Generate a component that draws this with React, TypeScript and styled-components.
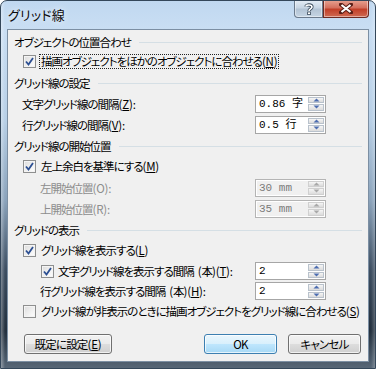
import React from "react";
import styled, { createGlobalStyle } from "styled-components";

const ui = `"Noto Sans CJK JP", "Noto Sans", sans-serif`;
const mono = `"Liberation Mono", "Noto Sans CJK JP", monospace`;

const GlobalStyle = createGlobalStyle`
  html, body {
    margin: 0;
    padding: 0;
    background: #ffffff;
  }
  body {
    font-family: ${ui};
  }
`;

const Window = styled.div`
  width: 376px;
  height: 369px;
  box-sizing: border-box;
  display: flex;
  flex-direction: column;
  border: 1px solid #34475a;
  border-radius: 7px 7px 0 0;
  overflow: hidden;
  background:
    linear-gradient(90deg, rgba(255, 255, 255, 0.35) 0px, rgba(255, 255, 255, 0) 4px, rgba(0, 0, 0, 0) 370px, rgba(255, 255, 255, 0.25) 374px),
    linear-gradient(180deg, #c0d8f0 0px, #c9def3 28px, #b7cfe6 120px, #8aa2ba 200px, #3c4d60 270px, #23303e 330px, #5a6a7a 369px);
`;

const TitleBar = styled.div`
  height: 28px;
  display: flex;
  align-items: flex-start;
`;

const Title = styled.div`
  flex: 1;
  padding: 6px 0 0 7px;
  font-size: 13px;
  line-height: 16px;
  color: #0c0c0c;
  letter-spacing: 0.2px;
  font-feature-settings: "palt";
  text-shadow: 0 0 6px rgba(255, 255, 255, 0.9);
`;

const Caption = styled.div<{ $close?: boolean }>`
  width: ${(p) => (p.$close ? 46 : 29)}px;
  height: 18px;
  margin-top: -1px;
  box-sizing: border-box;
  display: flex;
  align-items: center;
  justify-content: center;
  border: 1px solid ${(p) => (p.$close ? "#6d2a22" : "#6a7a8c")};
  border-top: none;
  border-radius: ${(p) => (p.$close ? "0 0 4px 0" : "0 0 0 4px")};
  margin-right: ${(p) => (p.$close ? 6 : 0)}px;
  background: ${(p) =>
    p.$close
      ? "linear-gradient(180deg, #e8a493 0%, #d4705e 45%, #c23f28 55%, #cf6a52 100%)"
      : "linear-gradient(180deg, #e6eef6 0%, #c8d6e4 45%, #b3c4d5 55%, #c5d5e4 100%)"};
  box-shadow: inset 0 0 0 1px rgba(255, 255, 255, 0.45);
`;

const Client = styled.div`
  flex: 1;
  margin: 0 6px 6px 6px;
  border: 1px solid #7c8fa3;
  background: #f0f0f0;
  display: flex;
  flex-direction: column;
  padding-top: 2px;
  font-size: 11.5px;
  letter-spacing: -1px;
  color: #000;
  font-feature-settings: "palt";
`;

const Header = styled.div<{ $gap?: number }>`
  height: 20px;
  margin-top: ${(p) => p.$gap ?? 0}px;
  display: flex;
  align-items: center;
  gap: 8px;
  padding: 0 6px;
  white-space: nowrap;

  &::after {
    content: "";
    flex: 1;
    height: 1px;
    background: #d5dfe5;
  }
`;

const Row = styled.div<{ $indent: number; $h?: number }>`
  height: ${(p) => p.$h ?? 21}px;
  display: flex;
  align-items: center;
  padding-left: ${(p) => p.$indent}px;
  padding-right: 42px;
  white-space: nowrap;
`;

const Label = styled.span<{ $disabled?: boolean; $gap?: number }>`
  flex: 1;
  margin-left: ${(p) => p.$gap ?? 0}px;
  color: ${(p) => (p.$disabled ? "#8d8d8d" : "#000")};
`;

const CheckText = styled.span<{ $focus?: boolean }>`
  margin-left: 3px;
  padding: 0 1px 0 1px;
  line-height: 13px;
  border: 1px dotted ${(p) => (p.$focus ? "#222" : "transparent")};
`;

const Latin = styled.span<{ $lead?: number }>`
  letter-spacing: -0.2px;
  margin-left: ${(p) => p.$lead ?? 0}px;
`;

const U = styled.span`
  text-decoration: underline;
  text-underline-offset: 1px;
`;

const Box = styled.span`
  width: 13px;
  height: 13px;
  box-sizing: border-box;
  border: 1px solid #8e8f8f;
  background: linear-gradient(135deg, #dcdcdc 0%, #f2f2f2 60%, #ffffff 100%);
  box-shadow: inset 0 0 0 1px #f4f4f4;
  display: inline-flex;
  align-items: center;
  justify-content: center;
  flex: none;
`;

const Spin = styled.div<{ $disabled?: boolean }>`
  width: 71px;
  height: 18px;
  box-sizing: border-box;
  border: 1px solid ${(p) => (p.$disabled ? "#b4b4b4" : "#a6a6a6")};
  box-shadow: inset 0 0 0 1px #ffffff;
  background: ${(p) => (p.$disabled ? "#f0f0f0" : "#ffffff")};
  display: flex;
  padding: 1px;
  flex: none;
  letter-spacing: 0;
`;

const SpinValue = styled.div<{ $disabled?: boolean }>`
  flex: 1;
  padding-left: 2px;
  font-family: ${mono};
  font-size: 11px;
  line-height: 14px;
  color: ${(p) => (p.$disabled ? "#7a7a7a" : "#000")};
`;

const SpinButtons = styled.div`
  width: 16px;
  display: flex;
  flex-direction: column;
  gap: 1px;
`;

const SpinBtn = styled.div<{ $disabled?: boolean }>`
  flex: 1;
  display: flex;
  align-items: center;
  justify-content: center;
  border: 1px solid ${(p) => (p.$disabled ? "#d0d0d0" : "#b9c2cc")};
  background: linear-gradient(180deg, #f6f6f6 0%, #e8e8e8 50%, #dcdcdc 100%);
`;

const Footer = styled.div`
  margin-top: auto;
  display: flex;
  align-items: center;
  padding: 0 7px 7px 5px;
`;

const Button = styled.button<{ $w: number; $default?: boolean; $push?: boolean }>`
  width: ${(p) => p.$w}px;
  height: 20px;
  padding: 0;
  margin-left: ${(p) => (p.$push ? "auto" : "11px")};
  font-family: ${ui};
  font-size: 11.5px;
  letter-spacing: -0.8px;
  line-height: 16px;
  font-feature-settings: "palt";
  color: #000;
  border-radius: 3px;
  border: 1px solid ${(p) => (p.$default ? "#3c7fb1" : "#707070")};
  box-shadow: inset 0 0 0 1px rgba(255, 255, 255, 0.7);
  background: ${(p) =>
    p.$default
      ? "linear-gradient(180deg, #eaf6fd 0%, #d9f0fc 48%, #bee6fd 52%, #a7d9f5 100%)"
      : "linear-gradient(180deg, #f2f2f2 0%, #ebebeb 48%, #dddddd 52%, #cfcfcf 100%)"};
`;

function Key({ k, plain, colon }: { k: string; plain?: boolean; colon?: boolean }) {
  return (
    <Latin>
      ({plain ? k : <U>{k}</U>}){colon ? ":" : ""}
    </Latin>
  );
}

function Check({ checked }: { checked?: boolean }) {
  return (
    <Box>
      {checked && (
        <svg width="9" height="9" viewBox="0 0 9 9">
          <path d="M1 4.5 L3.5 7.5 L8 1" fill="none" stroke="#2c4f92" strokeWidth="1.8" />
        </svg>
      )}
    </Box>
  );
}

function Arrow({ up, disabled }: { up?: boolean; disabled?: boolean }) {
  return (
    <svg width="7" height="4" viewBox="0 0 7 4">
      <path d={up ? "M0.5 3.5 L3.5 0.5 L6.5 3.5 Z" : "M0.5 0.5 L3.5 3.5 L6.5 0.5 Z"} fill={disabled ? "#a8a8a8" : "#4c6db0"} />
    </svg>
  );
}

function SpinBox({ value, disabled }: { value: string; disabled?: boolean }) {
  return (
    <Spin $disabled={disabled}>
      <SpinValue $disabled={disabled}>{value}</SpinValue>
      <SpinButtons>
        <SpinBtn $disabled={disabled}>
          <Arrow up disabled={disabled} />
        </SpinBtn>
        <SpinBtn $disabled={disabled}>
          <Arrow disabled={disabled} />
        </SpinBtn>
      </SpinButtons>
    </Spin>
  );
}

export default function App() {
  return (
    <>
      <GlobalStyle />
      <Window>
        <TitleBar>
          <Title>グリッド線</Title>
          <Caption>
            <svg width="10" height="12" viewBox="0 0 10 12">
              <path
                d="M2 3.5 C2 1.5 8 1.2 8 4 C8 6 5 5.8 5 8"
                fill="none"
                stroke="#3a4a5a"
                strokeWidth="3.2"
              />
              <path d="M2 3.5 C2 1.5 8 1.2 8 4 C8 6 5 5.8 5 8" fill="none" stroke="#fff" strokeWidth="1.6" />
              <rect x="3.6" y="9" width="2.8" height="2.6" fill="#fff" stroke="#3a4a5a" strokeWidth="0.8" />
            </svg>
          </Caption>
          <Caption $close>
            <svg width="14" height="11" viewBox="0 0 14 11">
              <path d="M2 1.5 L12 9.5 M12 1.5 L2 9.5" stroke="#5a1e16" strokeWidth="4" strokeLinecap="square" />
              <path d="M2.5 2 L11.5 9 M11.5 2 L2.5 9" stroke="#fff" strokeWidth="2.2" />
            </svg>
          </Caption>
        </TitleBar>
        <Client>
          <Header>オブジェクトの位置合わせ</Header>
          <Row $indent={15} $h={19}>
            <Check checked />
            <CheckText $focus>
              描画オブジェクトをほかのオブジェクトに合わせる<Key k="N" />
            </CheckText>
          </Row>
          <Header $gap={2}>グリッド線の設定</Header>
          <Row $indent={14}>
            <Label>
              文字グリッド線の間隔<Key k="Z" colon />
            </Label>
            <SpinBox value="0.86 字" />
          </Row>
          <Row $indent={14}>
            <Label>
              行グリッド線の間隔<Key k="V" colon />
            </Label>
            <SpinBox value="0.5 行" />
          </Row>
          <Header $gap={1}>グリッド線の開始位置</Header>
          <Row $indent={15}>
            <Check checked />
            <CheckText>
              左上余白を基準にする<Key k="M" />
            </CheckText>
          </Row>
          <Row $indent={32}>
            <Label $disabled>
              左開始位置<Key k="O" plain colon />
            </Label>
            <SpinBox value="30 mm" disabled />
          </Row>
          <Row $indent={32}>
            <Label $disabled>
              上開始位置<Key k="R" plain colon />
            </Label>
            <SpinBox value="35 mm" disabled />
          </Row>
          <Header $gap={1}>グリッドの表示</Header>
          <Row $indent={15}>
            <Check checked />
            <CheckText>
              グリッド線を表示する<Key k="L" />
            </CheckText>
          </Row>
          <Row $indent={33} $h={20}>
            <Check checked />
            <Label $gap={4}>
              文字グリッド線を表示する間隔<Latin $lead={4}>(</Latin>本<Latin>)</Latin>
              <Key k="T" colon />
            </Label>
            <SpinBox value="2" />
          </Row>
          <Row $indent={32} $h={20}>
            <Label>
              行グリッド線を表示する間隔<Latin $lead={4}>(</Latin>本<Latin>)</Latin>
              <Key k="H" colon />
            </Label>
            <SpinBox value="2" />
          </Row>
          <Row $indent={15}>
            <Check />
            <CheckText>
              グリッド線が非表示のときに描画オブジェクトをグリッド線に合わせる<Key k="S" />
            </CheckText>
          </Row>
          <Footer>
            <Button $w={88}>
              既定に設定<Key k="E" />
            </Button>
            <Button $w={73} $default $push>
              OK
            </Button>
            <Button $w={73}>キャンセル</Button>
          </Footer>
        </Client>
      </Window>
    </>
  );
}
